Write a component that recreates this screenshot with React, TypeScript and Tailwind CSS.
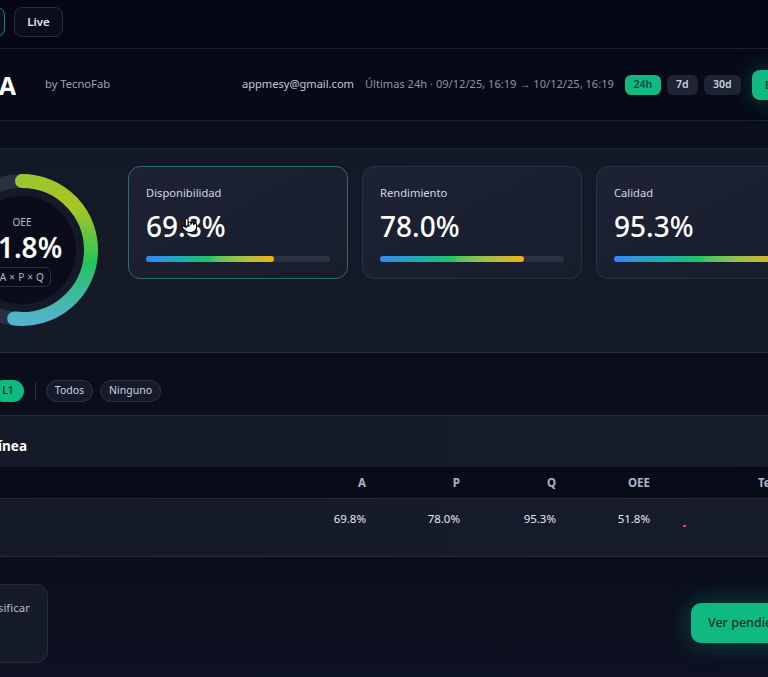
import { Pointer } from 'lucide-react';

const kpis = [
	{ label: 'Disponibilidad', value: 69.8, active: true },
	{ label: 'Rendimiento', value: 78.0, active: false },
	{ label: 'Calidad', value: 95.3, active: false },
];

function Gauge({ value }: { value: number }) {
	const r = 69;
	const a = (value / 100) * 2 * Math.PI;
	const ex = 76 + r * Math.sin(a);
	const ey = 76 - r * Math.cos(a);
	const large = value > 50 ? 1 : 0;
	return (
		<div className="relative -ml-[54px] mt-[8px] h-[152px] w-[152px] shrink-0">
			<svg width="152" height="152" viewBox="0 0 152 152" className="absolute inset-0">
				<defs>
					<linearGradient id="oeeArc" x1="0" y1="7" x2="0" y2="145" gradientUnits="userSpaceOnUse">
						<stop offset="0%" stopColor="#9cc72c" />
						<stop offset="20%" stopColor="#a8c424" />
						<stop offset="60%" stopColor="#22c55e" />
						<stop offset="100%" stopColor="#52b3cc" />
					</linearGradient>
				</defs>
				<circle cx="76" cy="76" r="62" fill="#141a28" />
				<circle cx="76" cy="76" r="54" fill="#0a0d19" />
				<circle cx="76" cy="76" r={r} fill="none" stroke="#2a3040" strokeWidth="14" />
				<path
					d={`M 76 ${76 - r} A ${r} ${r} 0 ${large} 1 ${ex.toFixed(2)} ${ey.toFixed(2)}`}
					fill="none"
					stroke="url(#oeeArc)"
					strokeWidth="14"
					strokeLinecap="round"
				/>
			</svg>
			<div className="absolute inset-0 flex flex-col items-center pt-[41px]">
				<span className="text-[10px] leading-[14px] text-[#b4bccb]">OEE</span>
				<span className="mt-[2px] text-[28px] font-semibold leading-[32px] text-white">{value.toFixed(1)}%</span>
				<span className="mt-[4px] rounded-md border border-[#2a3142] px-[6px] text-[10px] leading-[18px] tracking-wide text-[#aeb7c6]">
					A × P × Q
				</span>
			</div>
		</div>
	);
}

function KpiCard({ label, value, active }: { label: string; value: number; active: boolean }) {
	return (
		<div
			className={`relative h-[113px] w-[220px] shrink-0 rounded-[12px] border bg-gradient-to-br from-[#1d2334] to-[#181d2c] px-[17px] pt-[17px] ${
				active ? 'border-[#2e6e62]' : 'border-[#2a3142]'
			}`}
		>
			<div className="text-[11.2px] leading-[18px] text-[#d3d8e0]">{label}</div>
			<div className="mt-[6px] text-[28px] font-medium leading-[36px] text-white">{value.toFixed(1)}%</div>
			<div className="mt-[12px] h-[6px] w-full rounded-full bg-[#2b3142]">
				<div
					className="h-full rounded-full bg-gradient-to-r from-[#3b82f6] via-[#22c55e] to-[#eab308]"
					style={{ width: `${value}%` }}
				/>
			</div>
			{active && (
				<Pointer
					size={17}
					strokeWidth={1.6}
					className="absolute left-[52px] top-[50px] fill-white text-black"
				/>
			)}
		</div>
	);
}

export default function App() {
	const cols = [
		{ key: 'A', w: 'w-[95px]', v: '69.8%' },
		{ key: 'P', w: 'w-[94px]', v: '78.0%' },
		{ key: 'Q', w: 'w-[96px]', v: '95.3%' },
		{ key: 'OEE', w: 'w-[94px]', v: '51.8%' },
	];

	return (
		<div className="h-[677px] w-[768px] overflow-hidden bg-[#050814] font-['Noto_Sans','Open_Sans',sans-serif]">
			{/* Top bar */}
			<div className="flex h-[49px] items-start gap-[9px] border-b border-[#1a2030] bg-[#050814] pt-[7px]">
				<button className="-ml-[40px] h-[30px] w-[45px] shrink-0 rounded-lg border border-[#1d7f6c] bg-[#0a1219] text-[11px] font-semibold text-[#e5e7eb]">
					Hoy
				</button>
				<button className="h-[30px] w-[49px] shrink-0 rounded-lg border border-[#262d3d] bg-[#0a0e1a] text-[11.5px] font-semibold text-[#e5e7eb]">
					Live
				</button>
			</div>

			{/* Header */}
			<div className="flex h-[72px] items-center border-b border-[#1a2030] bg-[#060918] whitespace-nowrap">
				<div className="flex w-[242px] shrink-0 items-center">
					<div className="flex w-[16px] shrink-0 justify-end overflow-hidden">
						<span className="text-[25px] font-bold leading-[30px] text-white">MESA</span>
					</div>
					<span className="ml-[29px] text-[11.2px] text-[#9aa3b2]">by TecnoFab</span>
				</div>
				<span className="shrink-0 text-[11.1px] text-[#c3c9d3]">appmesy@gmail.com</span>
				<span className="ml-[11px] shrink-0 text-[11.1px] text-[#8d95a5]">
					Últimas 24h · 09/12/25, 16:19 → 10/12/25, 16:19
				</span>
				<div className="ml-[11px] flex shrink-0 items-center gap-[6px]">
					<button className="h-[20px] w-[36px] rounded-md bg-[#10b981] text-[10.5px] font-semibold text-[#064e3b]">24h</button>
					<button className="h-[20px] w-[31px] rounded-md bg-[#1e2432] text-[10.5px] font-semibold text-[#cbd5e1]">7d</button>
					<button className="h-[20px] w-[37px] rounded-md bg-[#1e2432] text-[10.5px] font-semibold text-[#cbd5e1]">30d</button>
				</div>
				<button className="ml-[11px] h-[30px] shrink-0 rounded-lg bg-[#10b981] px-[13px] text-[11.5px] font-semibold text-[#064e3b] shadow-[0_0_22px_rgba(16,185,129,0.35)]">
					Exportar
				</button>
			</div>

			{/* Spacer band */}
			<div className="h-[28px] border-b border-[#1c2232] bg-[#0b0f1d]" />

			{/* KPI section */}
			<div className="flex h-[204px] items-start border-b border-[#262c3c] bg-gradient-to-b from-[#131827] to-[#141a28] pt-[17px]">
				<Gauge value={51.8} />
				<div className="ml-[30px] flex shrink-0 gap-[14px]">
					{kpis.map((k) => (
						<KpiCard key={k.label} {...k} />
					))}
				</div>
			</div>

			{/* Line filter */}
			<div className="flex h-[63px] items-start border-b border-[#232a3a] bg-[#0a0e1b] pt-[27px]">
				<span className="-ml-[8px] flex h-[22px] w-[32px] shrink-0 items-center justify-center rounded-full bg-[#10b981] text-[10.5px] font-medium text-[#06261d]">
					L1
				</span>
				<span className="ml-[11px] mt-[2px] h-[18px] w-px shrink-0 bg-[#2a3040]" />
				<button className="ml-[10px] h-[22px] w-[47px] shrink-0 rounded-full border border-[#2b3445] bg-[#151b29] text-[10.5px] text-[#cbd5e1]">
					Todos
				</button>
				<button className="ml-[7px] h-[22px] w-[61px] shrink-0 rounded-full border border-[#2b3445] bg-[#151b29] text-[10.5px] text-[#cbd5e1]">
					Ninguno
				</button>
			</div>

			{/* Table */}
			<div className="border-b border-[#262c3c] bg-gradient-to-r from-[#151a29] to-[#171c2b]">
				<div className="flex h-[51px] items-end pb-[11px]">
					<div className="flex w-[27px] shrink-0 justify-end overflow-hidden whitespace-nowrap">
						<span className="text-[13.5px] font-bold leading-[20px] text-white">OEE por línea</span>
					</div>
				</div>
				<div className="flex h-[31px] items-center whitespace-nowrap bg-[#080c18] text-[11.5px] font-bold text-[#a9b6c8]">
					<div className="w-[271px] shrink-0" />
					{cols.map((c) => (
						<div key={c.key} className={`${c.w} shrink-0 text-right`}>
							{c.key}
						</div>
					))}
					<div className="w-[108px] shrink-0" />
					<div className="shrink-0">Tendencia</div>
				</div>
				<div className="flex h-[58px] items-start whitespace-nowrap border-t border-[#222938] pt-[11px] text-[11.5px] leading-[18px] text-[#e2e8f0]">
					<div className="w-[271px] shrink-0" />
					{cols.map((c) => (
						<div key={c.key} className={`${c.w} shrink-0 text-right`}>
							{c.v}
						</div>
					))}
					<div className="ml-[33px] mt-[15px] h-[2px] w-[3px] shrink-0 bg-[#c9574d]" />
				</div>
			</div>

			{/* Bottom */}
			<div className="flex h-[130px] items-start bg-gradient-to-b from-[#0a0e1c] to-[#0d1222]">
				<div className="-ml-[52px] mt-[27px] flex h-[79px] w-[100px] shrink-0 justify-end overflow-hidden whitespace-nowrap rounded-[12px] border border-[#262d3d] bg-[#161b29] pr-[17px] pt-[14px]">
					<span className="text-[11.5px] leading-[18px] text-[#b3bac7]">Clasificar</span>
				</div>
				<button className="ml-[643px] mt-[46px] h-[40px] shrink-0 whitespace-nowrap rounded-[10px] bg-[#10b981] px-[17px] text-[12.5px] font-medium text-[#0b3328] shadow-[0_0_24px_rgba(16,185,129,0.35)]">
					Ver pendientes
				</button>
			</div>
		</div>
	);
}
